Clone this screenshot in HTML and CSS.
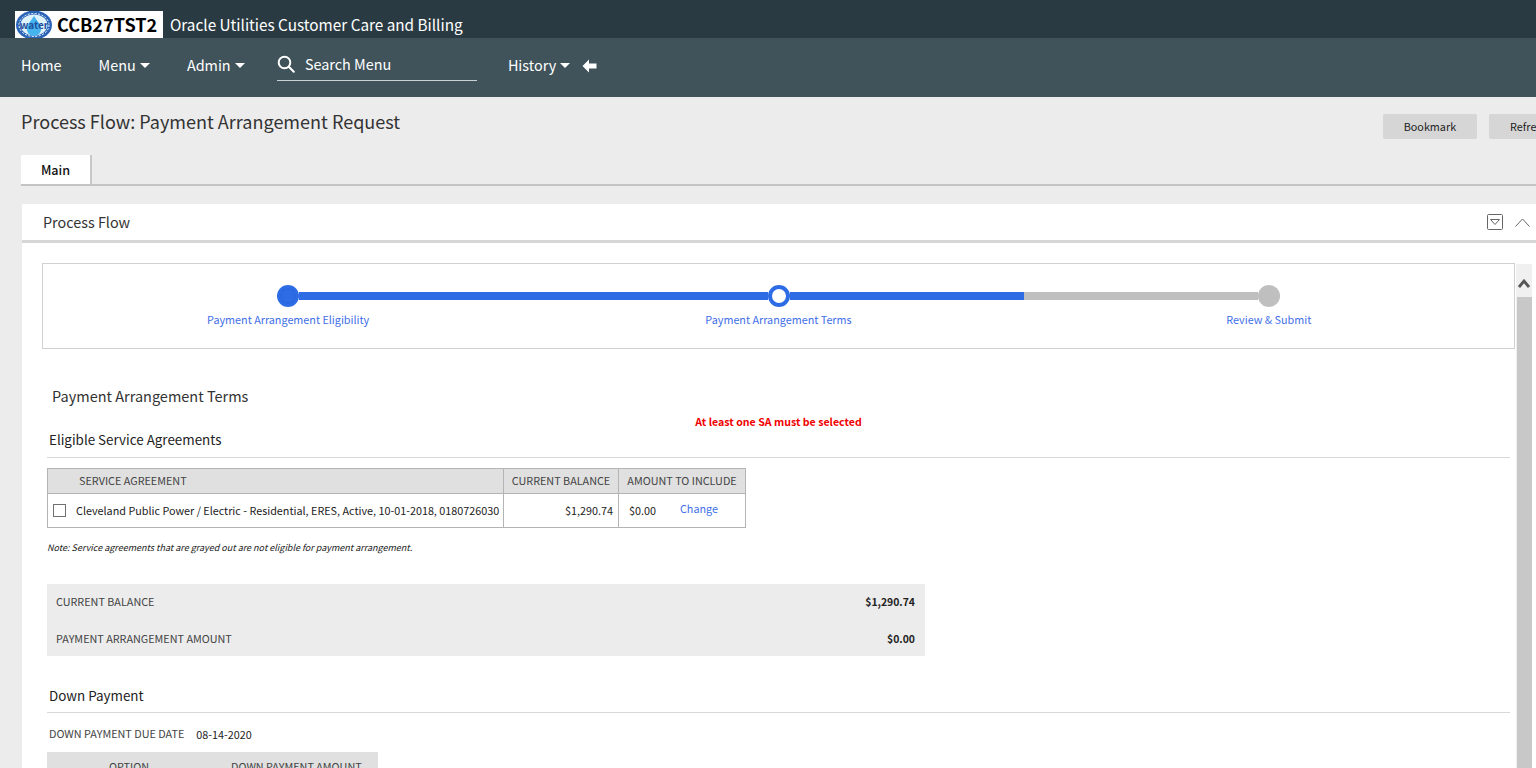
FILE: index.html
```html
<!DOCTYPE html>
<html lang="en">
  <head>
    <meta charset="UTF-8" />
    <title>Process Flow: Payment Arrangement Request</title>
    <link rel="stylesheet" href="styles.css">
  </head>
  <body>
    <header class="top-bar">
      <div class="logo-box">
        <svg class="logo-mark" width="38" height="27" viewBox="0 0 38 27">
          <ellipse cx="19" cy="14" rx="18" ry="14.5" fill="#2a64b8" />
          <ellipse cx="19" cy="14" rx="15" ry="11.5" fill="none" stroke="#ffffff" stroke-width="1" stroke-dasharray="2 1.5" />
          <ellipse cx="19" cy="14" rx="13.5" ry="10.5" fill="#dff1fb" />
          <path d="M19 5 C22 10 26 13 26 18 C26 22 23 25 19 25 C15 25 12 22 12 18 C12 13 16 10 19 5 Z" fill="#45b4ee" />
          <text x="19" y="18" class="logo-water" text-anchor="middle">water</text>
        </svg>
        <span class="logo-name">CCB27TST2</span>
      </div>
      <span class="app-name">Oracle Utilities Customer Care and Billing</span>
    </header>

    <nav class="nav-bar">
      <a class="nav-item nav-home">Home</a>
      <a class="nav-item nav-menu">Menu <i class="caret"></i></a>
      <a class="nav-item nav-admin">Admin <i class="caret"></i></a>
      <div class="search">
        <svg width="18" height="18" viewBox="0 0 18 18" fill="none" stroke="#ffffff" stroke-width="2">
          <circle cx="7.5" cy="7.5" r="5.8" />
          <path d="M11.8 11.8 L16.8 16.8" stroke-linecap="round" />
        </svg>
        <span>Search Menu</span>
      </div>
      <a class="nav-item nav-history">History <i class="caret"></i></a>
      <svg class="nav-back" width="15" height="14" viewBox="0 0 15 14">
        <path d="M7 0.5 L0.5 7 L7 13.5 L7 9.5 L14.5 9.5 L14.5 4.5 L7 4.5 Z" fill="#ffffff" />
      </svg>
    </nav>

    <main class="page">
      <div class="page-head">
        <h1>Process Flow: Payment Arrangement Request</h1>
        <div class="page-actions">
          <button class="gray-btn">Bookmark</button>
          <button class="gray-btn">Refresh</button>
        </div>
      </div>

      <div class="tabs">
        <div class="tab">Main</div>
      </div>

      <section class="panel">
        <div class="panel-head">
          <h2>Process Flow</h2>
          <svg class="panel-icon" width="16" height="16" viewBox="0 0 16 16" fill="none" stroke="#666666">
            <rect x="0.5" y="0.5" width="15" height="15" rx="1" />
            <path d="M3.5 5.5 H12.5 L8 10.5 Z" />
          </svg>
          <svg class="panel-icon panel-collapse" width="15" height="9" viewBox="0 0 15 9" fill="none" stroke="#666666">
            <path d="M0.5 8.5 L7.5 1 L14.5 8.5" />
          </svg>
        </div>

        <div class="panel-body">
          <div class="content">
            <div class="flow">
              <div class="step">
                <div class="track">
                  <span class="seg"></span><span class="dot dot-done"></span><span class="seg seg-blue"></span>
                </div>
                <a class="step-label">Payment Arrangement Eligibility</a>
              </div>
              <div class="step">
                <div class="track">
                  <span class="seg seg-blue"></span><span class="dot dot-current"></span><span class="seg seg-blue"></span>
                </div>
                <a class="step-label">Payment Arrangement Terms</a>
              </div>
              <div class="step">
                <div class="track">
                  <span class="seg seg-gray"></span><span class="dot dot-todo"></span><span class="seg"></span>
                </div>
                <a class="step-label">Review &amp; Submit</a>
              </div>
            </div>

            <h3 class="terms-title">Payment Arrangement Terms</h3>
            <div class="error">At least one SA must be selected</div>

            <h4 class="sub-head sub-eligible">Eligible Service Agreements</h4>
            <table class="sa-table">
              <thead>
                <tr>
                  <th class="col-sa">SERVICE AGREEMENT</th>
                  <th class="col-bal">CURRENT BALANCE</th>
                  <th class="col-amt">AMOUNT TO INCLUDE</th>
                </tr>
              </thead>
              <tbody>
                <tr>
                  <td class="cell-sa"><span class="check"></span>Cleveland Public Power / Electric - Residential, ERES, Active, 10-01-2018, 0180726030</td>
                  <td class="cell-bal">$1,290.74</td>
                  <td class="cell-amt"><span>$0.00</span><a class="change">Change</a></td>
                </tr>
              </tbody>
            </table>
            <p class="note">Note: Service agreements that are grayed out are not eligible for payment arrangement.</p>

            <div class="summary">
              <div class="summary-row"><span>CURRENT BALANCE</span><strong>$1,290.74</strong></div>
              <div class="summary-row"><span>PAYMENT ARRANGEMENT AMOUNT</span><strong>$0.00</strong></div>
            </div>

            <h4 class="sub-head sub-down">Down Payment</h4>
            <div class="due-date"><span>DOWN PAYMENT DUE DATE</span><span class="due-value">08-14-2020</span></div>
            <div class="option-head">
              <span class="opt-col">OPTION</span>
              <span class="opt-amt">DOWN PAYMENT AMOUNT</span>
            </div>
          </div>

          <div class="scrollbar">
            <svg width="12" height="9" viewBox="0 0 12 9" fill="none" stroke="#555555" stroke-width="2.8">
              <path d="M1 8 L6 2 L11 8" />
            </svg>
            <div class="thumb"></div>
          </div>
        </div>
      </section>
    </main>
  </body>
</html>
```

FILE: styles.css
```css
html,
body {
  margin: 0;
  height: 768px;
  overflow: hidden;
}
body {
  font-family: "Noto Sans CJK SC", "Noto Sans", sans-serif;
  background-color: #ececec;
  color: #1f1f1f;
}
h1,
h2,
h3,
h4,
p {
  margin: 0;
  font-weight: normal;
}

/* top bars */
.top-bar {
  height: 38px;
  background-color: #2a3a42;
  display: flex;
  align-items: flex-end;
  padding-left: 15px;
  box-sizing: border-box;
}
.logo-box {
  width: 148px;
  height: 27px;
  background-color: #fff;
  display: flex;
  align-items: center;
}
.logo-mark {
  flex: none;
}
.logo-water {
  font-size: 10px;
  font-weight: bold;
  fill: #1f4f9c;
}
.logo-name {
  margin-left: 4px;
  font-size: 18.1px;
  line-height: 27px;
  height: 27px;
  font-weight: bold;
  color: #000;
}
.app-name {
  margin-left: 7px;
  color: #fff;
  font-size: 15.3px;
  line-height: 26px;
  height: 27px;
}
.nav-bar {
  box-sizing: border-box;
  height: 59px;
  padding-bottom: 5px;
  background-color: #40535b;
  display: flex;
  align-items: center;
  color: #fff;
  font-size: 14.4px;
  line-height: 22px;
}
.nav-item {
  display: flex;
  align-items: center;
  color: #fff;
  white-space: pre;
}
.nav-home {
  margin-left: 21px;
}
.nav-menu {
  margin-left: 37px;
}
.nav-admin {
  margin-left: 37px;
}
.nav-history {
  margin-left: 31px;
}
.caret {
  display: inline-block;
  width: 0;
  height: 0;
  margin-left: 1px;
  border-left: 5.5px solid transparent;
  border-right: 5.5px solid transparent;
  border-top: 5px solid #fff;
}
.search {
  margin-left: 32px;
  width: 200px;
  height: 33px;
  border-bottom: 1px solid #c9d1d4;
  display: flex;
  align-items: center;
  gap: 10px;
  margin-bottom: 2px;
}
.nav-back {
  margin-left: 12px;
  margin-top: 2px;
}

/* page */
.page {
  padding-top: 12px;
}
.page-head {
  display: flex;
  justify-content: space-between;
  padding-left: 21px;
  height: 46px;
}
.page-head h1 {
  font-size: 18.05px;
  line-height: 24px;
  color: #333;
}
.page-actions {
  display: flex;
  gap: 12px;
  margin-top: 5px;
  margin-right: -33px;
}
.gray-btn {
  flex: none;
  height: 25px;
  border: 0;
  border-radius: 2px;
  padding: 0 21px 2px;
  background-color: #d6d6d6;
  font-family: inherit;
  font-size: 10.8px;
  color: #222;
}
.tabs {
  margin-left: 21px;
  height: 29px;
  border-bottom: 2px solid #c4c4c4;
  display: flex;
}
.tab {
  width: 69px;
  height: 29px;
  background-color: #fff;
  border-right: 2px solid #c8c8c8;
  text-align: center;
  font-size: 12.6px;
  line-height: 30px;
  font-weight: 500;
  color: #111;
}

/* panel */
.panel {
  margin: 18px 0 0 22px;
  background-color: #fff;
}
.panel-head {
  height: 36px;
  border-bottom: 3px solid #d6d6d6;
  display: flex;
  align-items: center;
  padding-left: 21px;
}
.panel-head h2 {
  font-size: 14.4px;
  line-height: 36px;
  color: #333;
  flex: 1;
}
.panel-collapse {
  margin: 0 6px 0 12px;
}
.panel-body {
  display: flex;
  align-items: flex-start;
  padding: 20px 4px 0 20px;
}
.content {
  flex: 1;
  min-width: 0;
}
.scrollbar {
  width: 16px;
  margin-left: 1px;
  margin-top: 1px;
  background-color: #f0f0f0;
  height: 504px;
  display: flex;
  flex-direction: column;
  align-items: center;
}
.scrollbar svg {
  margin-top: 15px;
  flex: none;
}
.thumb {
  margin-top: 9px;
  width: 15px;
  flex: 1;
  background-color: #c8c8c8;
}

/* process flow */
.flow {
  height: 84px;
  border: 1px solid #d0d0d0;
  display: flex;
}
.step {
  flex: 1;
  text-align: center;
  padding-top: 20px;
}
.track {
  display: flex;
  align-items: center;
  height: 24px;
}
.seg {
  flex: 1;
  height: 8px;
}
.seg-blue {
  background-color: #2e6ce6;
}
.seg-gray {
  background-color: #bfbfbf;
}
.dot {
  flex: none;
  box-sizing: border-box;
  width: 22px;
  height: 22px;
  border-radius: 50%;
}
.dot-done {
  background: radial-gradient(circle, #2e6ce6 6px, #2867dd 6.5px, #2867dd 7.5px, #2e6ce6 8px);
}
.dot-current {
  background-color: #fff;
  border: 4px solid #2e6ce6;
}
.dot-todo {
  background-color: #bfbfbf;
}
.step-label {
  display: block;
  margin-top: 3px;
  font-size: 10.8px;
  line-height: 16px;
  color: #3f6fe8;
}

/* terms */
.terms-title {
  margin: 36px 0 0 10px;
  font-size: 14.5px;
  line-height: 22px;
  color: #333;
}
.error {
  text-align: center;
  margin-top: 7px;
  font-size: 10.6px;
  line-height: 16px;
  font-weight: bold;
  color: #f00000;
}
.sub-head {
  margin-left: 5px;
  margin-right: 5px;
  padding-left: 2px;
  border-bottom: 1px solid #d8d8d8;
  font-size: 13.4px;
  line-height: 18px;
  color: #222;
}
.sub-eligible {
  padding-bottom: 9px;
}
.sa-table {
  margin: 10px 0 0 5px;
  border-collapse: collapse;
  width: 699px;
  table-layout: fixed;
  font-size: 10.8px;
  border: 1px solid #b4b4b4;
}
.sa-table th {
  height: 22px;
  padding: 0 0 2px;
  background-color: #e0e0e0;
  border: 1px solid #b4b4b4;
  font-weight: normal;
  color: #444;
}
.sa-table td {
  height: 31px;
  padding: 0 0 2px;
  border: 1px solid #b4b4b4;
  color: #222;
}
.col-sa {
  width: 455px;
  text-align: left;
  text-indent: 31px;
}
.col-bal {
  width: 114px;
}
.cell-sa {
  white-space: nowrap;
}
.check {
  display: inline-block;
  box-sizing: border-box;
  width: 13px;
  height: 13px;
  margin: 0 10px 0 5px;
  border: 1px solid #707070;
  vertical-align: -2px;
}
.sa-table .cell-bal {
  text-align: right;
  padding-right: 5px;
}
.sa-table .cell-amt {
  padding-left: 10px;
}
.change {
  margin-left: 24px;
  color: #3f6fe8;
  position: relative;
  top: -2px;
}
.note {
  margin: 13px 0 0 5px;
  font-size: 9px;
  line-height: 14px;
  font-style: italic;
  color: #222;
}
.summary {
  margin: 29px 0 0 5px;
  width: 878px;
  height: 72px;
  background-color: #ececec;
  font-size: 10.8px;
  color: #444;
  display: flex;
  flex-direction: column;
  gap: 2px;
}
.summary-row {
  height: 36px;
  padding: 0 10px 0 9px;
  display: flex;
  justify-content: space-between;
  align-items: center;
}
.summary-row:first-child {
  height: 34px;
}
.summary-row strong {
  color: #222;
  font-size: 10.4px;
}
.sub-down {
  margin-top: 30px;
  padding-bottom: 8px;
}
.due-date {
  margin: 12px 0 0 7px;
  font-size: 10.8px;
  line-height: 16px;
  color: #444;
  display: flex;
  gap: 12px;
}
.due-value {
  color: #222;
  position: relative;
  top: 1px;
}
.option-head {
  margin: 11px 0 0 5px;
  width: 331px;
  height: 40px;
  background-color: #e0e0e0;
  font-size: 10.8px;
  line-height: 28px;
  color: #444;
  display: flex;
}
.opt-col {
  margin-left: 62px;
}
.opt-amt {
  margin-left: 82px;
}
```
